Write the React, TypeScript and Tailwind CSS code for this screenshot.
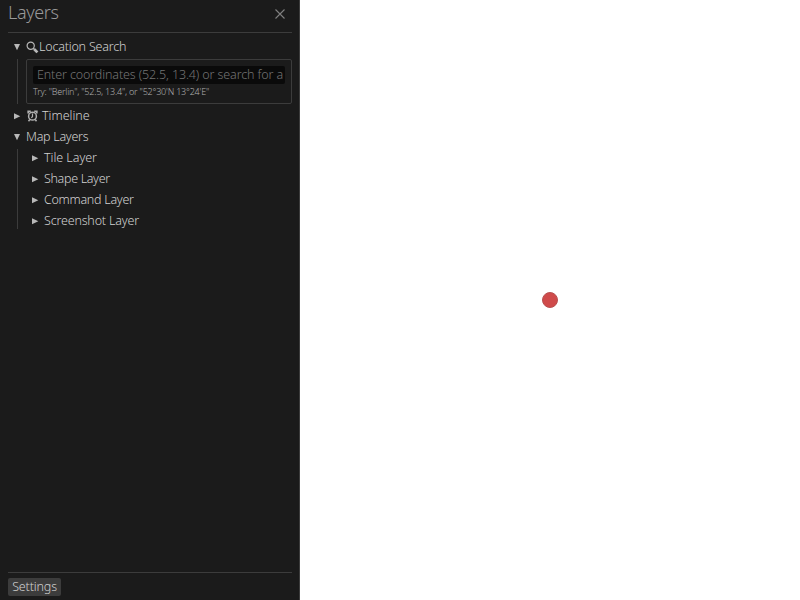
import React from "react";

function Arrow({ open = false }: { open?: boolean }) {
  return (
    <svg viewBox="0 0 8 8" className="h-2 w-2 shrink-0" fill="#b8b8b8">
      {open ? <path d="M1 1H7L4 7.2Z" /> : <path d="M1 1.2L7.3 4.2L1 7.2Z" />}
    </svg>
  );
}

function SearchIcon() {
  return (
    <svg viewBox="0 0 13 14" className="h-3.5 w-[13px] shrink-0" fill="none" stroke="#b8b8b8">
      <circle cx="4.7" cy="5.7" r="3.6" strokeWidth="1.2" />
      <path d="M7.3 8.3L8.7 9.7" strokeWidth="1.6" />
      <path d="M8.3 9.3L11.4 12.4" strokeWidth="2.7" />
    </svg>
  );
}

function ClockIcon() {
  return (
    <svg viewBox="0 0 11 12" className="h-3 w-[11px] shrink-0" fill="none" stroke="#b0b0b0">
      <circle cx="5.5" cy="6.2" r="3.9" strokeWidth="1.5" />
      <path d="M1.2 3.6V1.4H3.8M7.2 1.4H9.8V3.6" strokeWidth="1.7" />
      <path d="M2.8 9.5L1.5 11.2M8.2 9.5L9.5 11.2" strokeWidth="1.5" />
      <path d="M5.5 3.6V6.5L4.4 7.8" strokeWidth="1.2" />
    </svg>
  );
}

const layers = [
  { name: "Tile Layer", style: "tracking-[-0.05px]" },
  { name: "Shape Layer", style: "tracking-[-0.33px]" },
  { name: "Command Layer", style: "tracking-[-0.27px]" },
  { name: "Screenshot Layer", style: "tracking-[-0.17px]" },
];

export default function App() {
  return (
    <div className="flex h-[600px] w-[800px] overflow-hidden bg-white font-['Noto_Sans',sans-serif] text-[12.5px] font-light whitespace-nowrap text-[#d2d2d2]">
      <aside className="flex w-[300px] shrink-0 flex-col border-r border-[#3c3c3c] bg-[#1b1b1b] pr-[7px] pl-2">
        <header className="flex h-[33px] shrink-0 items-start justify-between border-b border-[#3c3c3c] pr-[7px]">
          <h1 className="h-6 text-[18px] leading-6 tracking-[-0.38px] text-[#999]">Layers</h1>
          <svg viewBox="0 0 10 10" className="mt-[9px] h-2.5 w-2.5" stroke="#808080" strokeWidth="1.1">
            <path d="M.5 .5L9.5 9.5M9.5 .5L.5 9.5" />
          </svg>
        </header>
        <main className="flex grow flex-col pt-[5px]">
          <section>
            <div className="flex h-[18px] items-center pl-[5px]">
              <Arrow open />
              <span className="ml-[5px] flex items-center">
                <SearchIcon />
                <span className="tracking-[-0.2px]">Location Search</span>
              </span>
            </div>
            <div className="mt-[3px] ml-[9px] border-l border-[#3c3c3c] pl-2">
              <div className="h-[45px] rounded-xs border border-[#3c3c3c] p-1.5">
                <div className="h-[18px] w-[252px] rounded-xs bg-[#0a0a0a] px-1">
                  <div className="w-[246px] overflow-hidden leading-[18px] tracking-[-0.12px] text-[#747474]">
                    Enter coordinates (52.5, 13.4) or search for address...
                  </div>
                </div>
                <p className="mt-0.5 text-[9px] leading-3 tracking-[-0.2px] text-[#b0b0b0]">
                  Try: "Berlin", "52.5, 13.4", or "52°30'N 13°24'E"
                </p>
              </div>
            </div>
          </section>
          <div className="mt-[3px] flex h-[18px] items-center pl-[5px]">
            <Arrow />
            <span className="ml-1.5 flex items-center gap-1">
              <ClockIcon />
              <span className="tracking-[-0.02px]">Timeline</span>
            </span>
          </div>
          <section className="mt-[3px]">
            <div className="flex h-[18px] items-center gap-[5px] pl-[5px]">
              <Arrow open />
              <span className="tracking-[-0.27px]">Map Layers</span>
            </div>
            <ul className="mt-[3px] ml-[9px] flex h-20 flex-col gap-[3px] border-l border-[#3c3c3c] pl-[13px]">
              {layers.map((layer) => (
                <li key={layer.name} className="flex h-[18px] shrink-0 items-center gap-[5px]">
                  <Arrow />
                  <span className={layer.style}>{layer.name}</span>
                </li>
              ))}
            </ul>
          </section>
        </main>
        <footer className="h-7 shrink-0 border-t border-[#3c3c3c] pt-[5px]">
          <button className="block h-[18px] w-[53px] rounded-xs bg-[#3c3c3c] text-center leading-[18px] tracking-[-0.15px]">
            Settings
          </button>
        </footer>
      </aside>
      <section className="flex grow items-center justify-center">
        <div className="h-4 w-4 rounded-full border border-[#b85050] bg-[#cf4a4a]" />
      </section>
    </div>
  );
}
